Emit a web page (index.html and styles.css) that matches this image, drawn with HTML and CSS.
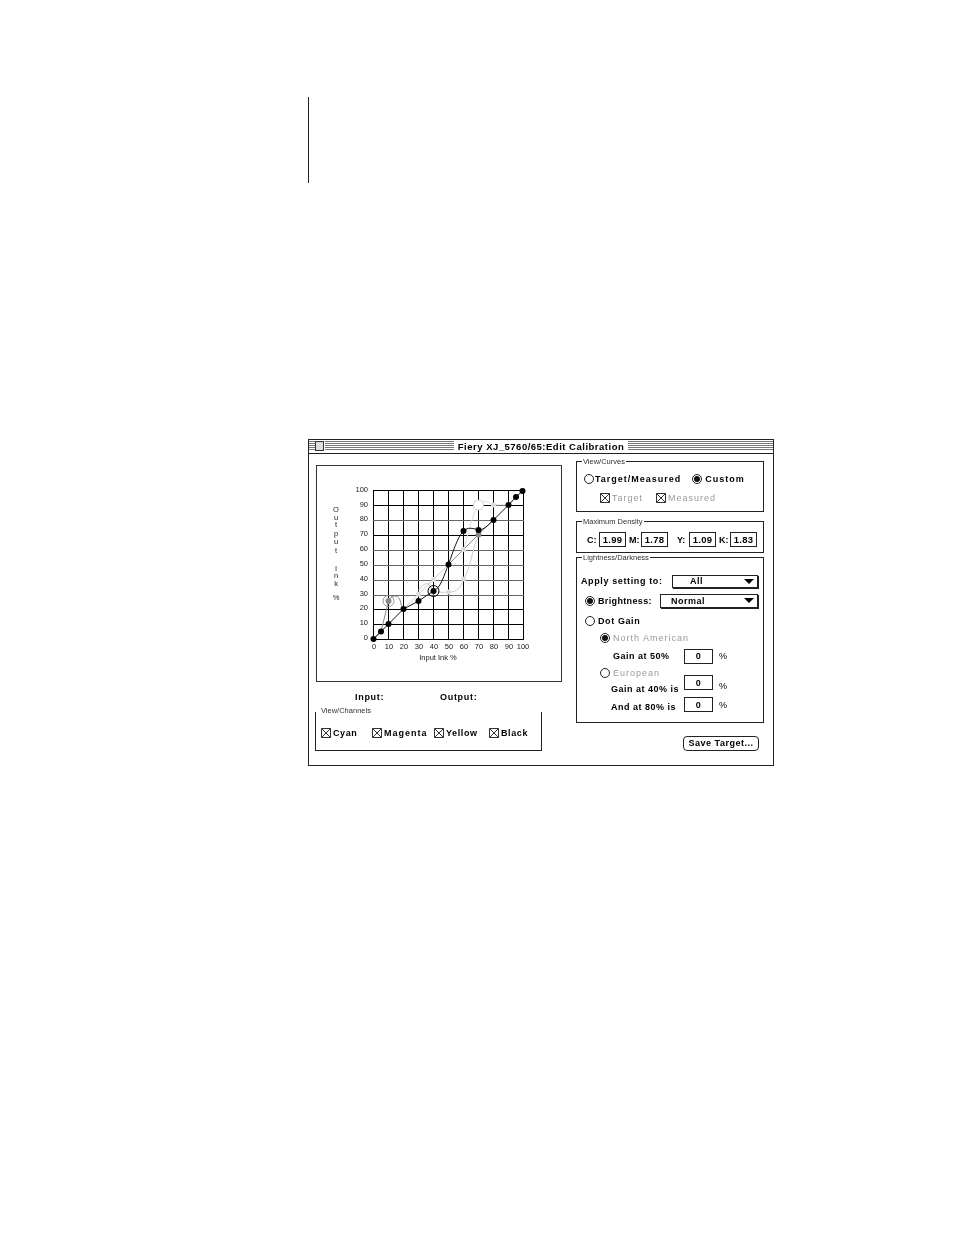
FILE: index.html
```html
<!DOCTYPE html>
<html lang="en">
<head>
<meta charset="utf-8">
<title>Fiery XJ_5760/65:Edit Calibration</title>
<link rel="stylesheet" href="styles.css">
</head>
<body>
<div class="rule"></div>
<main class="window">
  <header class="titlebar">
    <div class="title-side">
      <span class="stripes short"></span>
      <span class="closebox"></span>
      <span class="stripes"></span>
    </div>
    <h1 class="title">Fiery XJ_5760/65:Edit Calibration</h1>
    <div class="title-side"><span class="stripes"></span></div>
  </header>
  <div class="content">
    <section class="left">
      <div class="graph">
        <svg class="chart" viewBox="317 466 244 215" width="244" height="215">
          <g class="grid-dark">
            <path d="M373.5 490V639M388.5 490V639M403.5 490V639M418.5 490V639M433.5 490V639M448.5 490V639M463.5 490V639M478.5 490V639M493.5 490V639M508.5 490V639M523.5 490V639"/>
            <path d="M373 490.5H524M373 505.5H524M373 535.5H524M373 609.5H524M373 624.5H524M373 639.5H524"/>
          </g>
          <path class="grid-mid" d="M373 520.5H524M373 550.5H524M373 565.5H524M373 580.5H524M373 595.5H524"/>
          <path class="curve light" d="M403.5 609L418.5 594L433.5 579.5L448.5 564.5L463.5 549.5L478.5 534.5"/>
          <path class="curve light" d="M418.5 590Q424 582 429 584C432 592 436 593 448.5 592C458 592 460 588 463.5 579C470 570 472 550 478.5 534.5"/>
          <path class="curve pale" d="M463.5 549.5C468 535 472 515 478.5 505C484 500 488 501 493.5 505L508.5 505"/>
          <path class="curve mid" d="M373.5 639L381 631.5L388.5 601C392 595 397 594 400 600C402 606 401 608 403.5 609"/>
          <path class="curve mid" d="M448.5 564.5L478.5 534.5L493.5 520"/>
          <path class="curve dark" d="M373.5 639L388.5 624L403.5 609L418.5 601L433.5 591C441 588 444 575 448.5 564.5C453 552 457 538 463.5 531C468 527 472 528 478.5 530C484 530 488 525 493.5 520L508.5 505L516 497L523.5 490"/>
          <g class="dots-light">
            <circle cx="418.5" cy="594" r="2.5"/><circle cx="433.5" cy="579.5" r="2.5"/><circle cx="463.5" cy="549.5" r="2.5"/>
            <circle cx="433.5" cy="592" r="2.5"/><circle cx="448.5" cy="592" r="2.5"/><circle cx="463.5" cy="579" r="2.5"/>
            <circle cx="493.5" cy="505" r="2.5"/>
          </g>
          <circle class="ring pale-ring" cx="478.5" cy="505" r="5"/>
          <circle class="ring grey-ring" cx="388.5" cy="601" r="5.5"/>
          <g class="dots-mid"><circle cx="388.5" cy="601" r="3"/><circle cx="478.5" cy="534.5" r="3"/></g>
          <g class="dots-dark">
            <circle cx="373.5" cy="639" r="3"/><circle cx="381" cy="631.5" r="3"/><circle cx="388.5" cy="624" r="3"/>
            <circle cx="403.5" cy="609" r="3"/><circle cx="418.5" cy="601" r="3"/><circle cx="433.5" cy="591" r="3"/>
            <circle cx="448.5" cy="564.5" r="3"/><circle cx="463.5" cy="531" r="3"/><circle cx="478.5" cy="530" r="3"/>
            <circle cx="493.5" cy="520" r="3"/><circle cx="508.5" cy="505" r="3"/><circle cx="516" cy="497" r="3"/>
            <circle cx="522.5" cy="491" r="3"/>
          </g>
          <circle class="ring black-ring" cx="433.5" cy="591" r="5.5"/>
          <g class="tick-y">
            <text x="368" y="491.5">100</text><text x="368" y="506.5">90</text><text x="368" y="521">80</text>
            <text x="368" y="536">70</text><text x="368" y="551">60</text><text x="368" y="566">50</text>
            <text x="368" y="580.5">40</text><text x="368" y="595.5">30</text><text x="368" y="610">20</text>
            <text x="368" y="625">10</text><text x="368" y="640">0</text>
          </g>
          <g class="tick-x">
            <text x="374" y="649">0</text><text x="389" y="649">10</text><text x="404" y="649">20</text>
            <text x="419" y="649">30</text><text x="434" y="649">40</text><text x="449" y="649">50</text>
            <text x="464" y="649">60</text><text x="479" y="649">70</text><text x="494" y="649">80</text>
            <text x="509" y="649">90</text><text x="523" y="649">100</text>
            <text x="438" y="660">Input Ink %</text>
          </g>
          <g class="tick-x">
            <text x="336" y="512">O</text><text x="336" y="520">u</text><text x="336" y="527">t</text>
            <text x="336" y="536">p</text><text x="336" y="544">u</text><text x="336" y="553">t</text>
            <text x="336" y="571">I</text><text x="336" y="578">n</text><text x="336" y="586">k</text>
            <text x="336" y="600">%</text>
          </g>
        </svg>
      </div>
      <div class="readout"><span class="readout-input">Input:</span><span>Output:</span></div>
      <div class="group channels">
        <span class="legend">View/Channels</span>
        <div class="channel-row">
          <label class="check"><svg class="cb" viewBox="0 0 10 10"><path d="M.5.5h9v9h-9zM.5.5l9 9M9.5.5l-9 9"/></svg>Cyan</label>
          <label class="check wide-text"><svg class="cb" viewBox="0 0 10 10"><path d="M.5.5h9v9h-9zM.5.5l9 9M9.5.5l-9 9"/></svg>Magenta</label>
          <label class="check"><svg class="cb" viewBox="0 0 10 10"><path d="M.5.5h9v9h-9zM.5.5l9 9M9.5.5l-9 9"/></svg>Yellow</label>
          <label class="check"><svg class="cb" viewBox="0 0 10 10"><path d="M.5.5h9v9h-9zM.5.5l9 9M9.5.5l-9 9"/></svg>Black</label>
        </div>
      </div>
    </section>
    <section class="right">
      <div class="group curves">
        <span class="legend">View/Curves</span>
        <div class="curves-row one">
          <label class="check wide-text tight"><span class="radio"></span>Target/Measured</label>
          <label class="check wide-text"><span class="radio on"></span>Custom</label>
        </div>
        <div class="curves-row two">
          <label class="check off"><svg class="cb" viewBox="0 0 10 10"><path d="M.5.5h9v9h-9zM.5.5l9 9M9.5.5l-9 9"/></svg>Target</label>
          <label class="check off"><svg class="cb" viewBox="0 0 10 10"><path d="M.5.5h9v9h-9zM.5.5l9 9M9.5.5l-9 9"/></svg>Measured</label>
        </div>
      </div>
      <div class="group density">
        <span class="legend">Maximum Density</span>
        <span class="d-label c">C:</span><span class="field wide">1.99</span>
        <span class="d-label m">M:</span><span class="field wide">1.78</span>
        <span class="d-label y">Y:</span><span class="field wide">1.09</span>
        <span class="d-label k">K:</span><span class="field wide">1.83</span>
      </div>
      <div class="group brightness">
        <span class="legend">Lightness/Darkness</span>
        <div class="row apply">
          <span class="apply-label">Apply setting to:</span>
          <span class="select s-all">All<i class="arrow"></i></span>
        </div>
        <div class="row bright">
          <label class="check narrow-text"><span class="radio on"></span>Brightness:</label>
          <span class="select s-normal">Normal<i class="arrow"></i></span>
        </div>
        <div class="row dot"><label class="check"><span class="radio"></span>Dot Gain</label></div>
        <div class="row sub"><label class="check off"><span class="radio on"></span>North American</label></div>
        <div class="row gain g50"><span class="gain-label">Gain at 50%</span><span class="field">0</span><span class="pct">%</span></div>
        <div class="row sub"><label class="check off"><span class="radio"></span>European</label></div>
        <div class="row gain g40 raised-far"><span class="gain-label">Gain at 40% is</span><span class="field">0</span><span class="pct">%</span></div>
        <div class="row gain g40 raised-near"><span class="gain-label">And at 80% is</span><span class="field">0</span><span class="pct">%</span></div>
      </div>
      <button class="save" type="button">Save Target...</button>
    </section>
  </div>
</main>
</body>
</html>
```
FILE: styles.css
```css
* { box-sizing: border-box; }
html, body { margin: 0; padding: 0; background: #fff; }
body { width: 954px; height: 1235px; overflow: hidden; font-family: "Liberation Sans", Arial, sans-serif; color: #000; }

.rule { width: 1px; height: 86px; margin: 97px 0 0 308px; background: #222; }

.window { width: 466px; height: 327px; margin: 256px 0 0 308px; border: 1px solid #222; display: flex; flex-direction: column; will-change: transform; }

.titlebar { height: 14px; padding: 1px 0 2px 0; display: flex; align-items: stretch; border-bottom: 1px solid #222; flex: none; }
.title-side { flex: 1; display: flex; align-items: stretch; }
.stripes { flex: 1; background: repeating-linear-gradient(to bottom, #777 0, #777 1px, #fff 1px, #fff 2px); }
.stripes.short { flex: none; width: 6px; }
.closebox { width: 9px; margin-right: 1px; background: #ddd; border: 1px solid #333; }
.title { margin: 0; padding: 1px 4px 0; font-size: 9.5px; line-height: 10px; font-weight: 700; letter-spacing: .5px; white-space: nowrap; }

.content { flex: 1; display: flex; align-items: flex-start; padding: 7px 0 0 6px; gap: 14px; }

.left { width: 247px; flex: none; padding-top: 4px; }
.right { width: 188px; flex: none; display: flex; flex-direction: column; }

.graph { width: 246px; height: 217px; margin-left: 1px; border: 1px solid #333; }
.chart { display: block; }
.grid-dark path { stroke: #000; stroke-width: 1; fill: none; }
.grid-mid { stroke: #666; stroke-width: 1; fill: none; }
.curve { fill: none; stroke-width: 1; }
.curve.dark { stroke: #111; }
.curve.mid { stroke: #888; }
.curve.light { stroke: #ccc; }
.curve.pale { stroke: #ddd; }
.dots-dark circle { fill: #000; }
.dots-mid circle { fill: #888; }
.dots-light circle { fill: #ddd; }
.ring { fill: none; stroke-width: 1; }
.black-ring { stroke: #000; }
.grey-ring { stroke: #999; }
.pale-ring { stroke: #ccc; fill: #fff; }
.tick-y text, .tick-x text { font-size: 7.5px; fill: #222; }
.tick-y text { text-anchor: end; }
.tick-x text { text-anchor: middle; }

.readout { height: 30px; padding-left: 40px; display: flex; align-items: center; font-size: 9px; font-weight: 700; letter-spacing: .7px; }
.readout-input { width: 85px; }

.group { position: relative; border: 1px solid #222; }
.legend { position: absolute; top: -5px; left: 5px; padding: 0 1px; background: #fff; font-size: 7.5px; line-height: 9px; color: #333; white-space: nowrap; }

.channels { width: 227px; height: 39px; border-top: 0; }
.channels .legend { top: -6px; left: 4px; background: none; }
.channel-row { display: grid; grid-template-columns: 51px 62px 55px auto; padding: 15px 0 0 5px; }

.check { display: flex; align-items: center; gap: 2px; font-size: 9px; line-height: 12px; font-weight: 700; letter-spacing: .6px; white-space: nowrap; }
.check.off { color: #999; font-weight: 400; letter-spacing: 1px; }
.check.wide-text { letter-spacing: 1px; }
.check.tight { gap: 0; }
.check.narrow-text { letter-spacing: .35px; }
.cb { width: 10px; height: 10px; flex: none; }
.cb path { fill: none; stroke: #333; stroke-width: 1; }

.radio { position: relative; width: 10px; height: 10px; margin-right: 1px; flex: none; border: 1px solid #222; border-radius: 50%; background: #fff; }
.radio.on::after { content: ""; position: absolute; inset: 1px; border-radius: 50%; background: #111; }

.curves { height: 51px; }
.curves-row { display: flex; align-items: center; }
.curves-row.one { padding: 11px 0 0 7px; gap: 11px; }
.curves-row.two { padding: 7px 0 0 23px; gap: 13px; }

.density { height: 32px; margin-top: 9px; display: flex; align-items: center; padding-top: 5px; }
.d-label { font-size: 9px; font-weight: 700; }
.d-label.c { margin-left: 10px; width: 12px; }
.d-label.m { margin-left: 3px; width: 12px; }
.d-label.y { margin-left: 9px; width: 12px; }
.d-label.k { margin-left: 3px; width: 11px; }
.field { display: flex; align-items: center; justify-content: center; width: 29px; height: 15px; flex: none; border: 1px solid #222; font-size: 9px; font-weight: 700; letter-spacing: .5px; }
.field.wide { width: 27px; font-size: 9.5px; font-weight: 700; letter-spacing: .3px; }

.brightness { height: 166px; margin-top: 4px; padding-top: 16px; display: grid; grid-template-rows: 14px 26px 14px 20px 16px 18px 14px 22px; align-items: center; }
.row { display: flex; align-items: center; }
.apply-label { width: 91px; margin-left: 4px; font-size: 9px; font-weight: 700; letter-spacing: .62px; white-space: nowrap; }
.select { position: relative; display: block; height: 13px; border: 1px solid #222; box-shadow: 1px 1px 0 #222; font-size: 9px; line-height: 10px; font-weight: 700; letter-spacing: .5px; }
.s-all { width: 86px; padding-left: 17px; }
.bright .check { width: 75px; padding-left: 8px; }
.s-normal { width: 98px; padding-left: 10px; height: 14px; line-height: 12px; margin-left: 8px; }
.arrow { position: absolute; right: 3px; top: 3px; width: 0; height: 0; border: 5px solid transparent; border-top: 5px solid #000; border-bottom: 0; }
.dot { padding-left: 8px; }
.sub { padding-left: 23px; }
.gain { padding-right: 30px; }
.g50 { padding-left: 36px; }
.g40 { padding-left: 34px; }
.gain-label { flex: 1; font-size: 9px; font-weight: 700; letter-spacing: .5px; white-space: nowrap; }
.pct { width: 20px; padding-left: 6px; font-size: 9px; }
.raised-far .field { margin-bottom: 13px; }
.raised-far .pct { margin-bottom: 6px; }
.raised-near .field { margin-bottom: 5px; }
.raised-near .pct { margin-bottom: 4px; }

.save { align-self: flex-end; width: 76px; height: 15px; margin: 13px 5px 0 0; padding: 0 0 2px; border: 1px solid #222; border-radius: 4px; background: #fff; font-family: inherit; font-size: 9px; font-weight: 700; letter-spacing: .5px; color: #000; line-height: 12px; }
```
